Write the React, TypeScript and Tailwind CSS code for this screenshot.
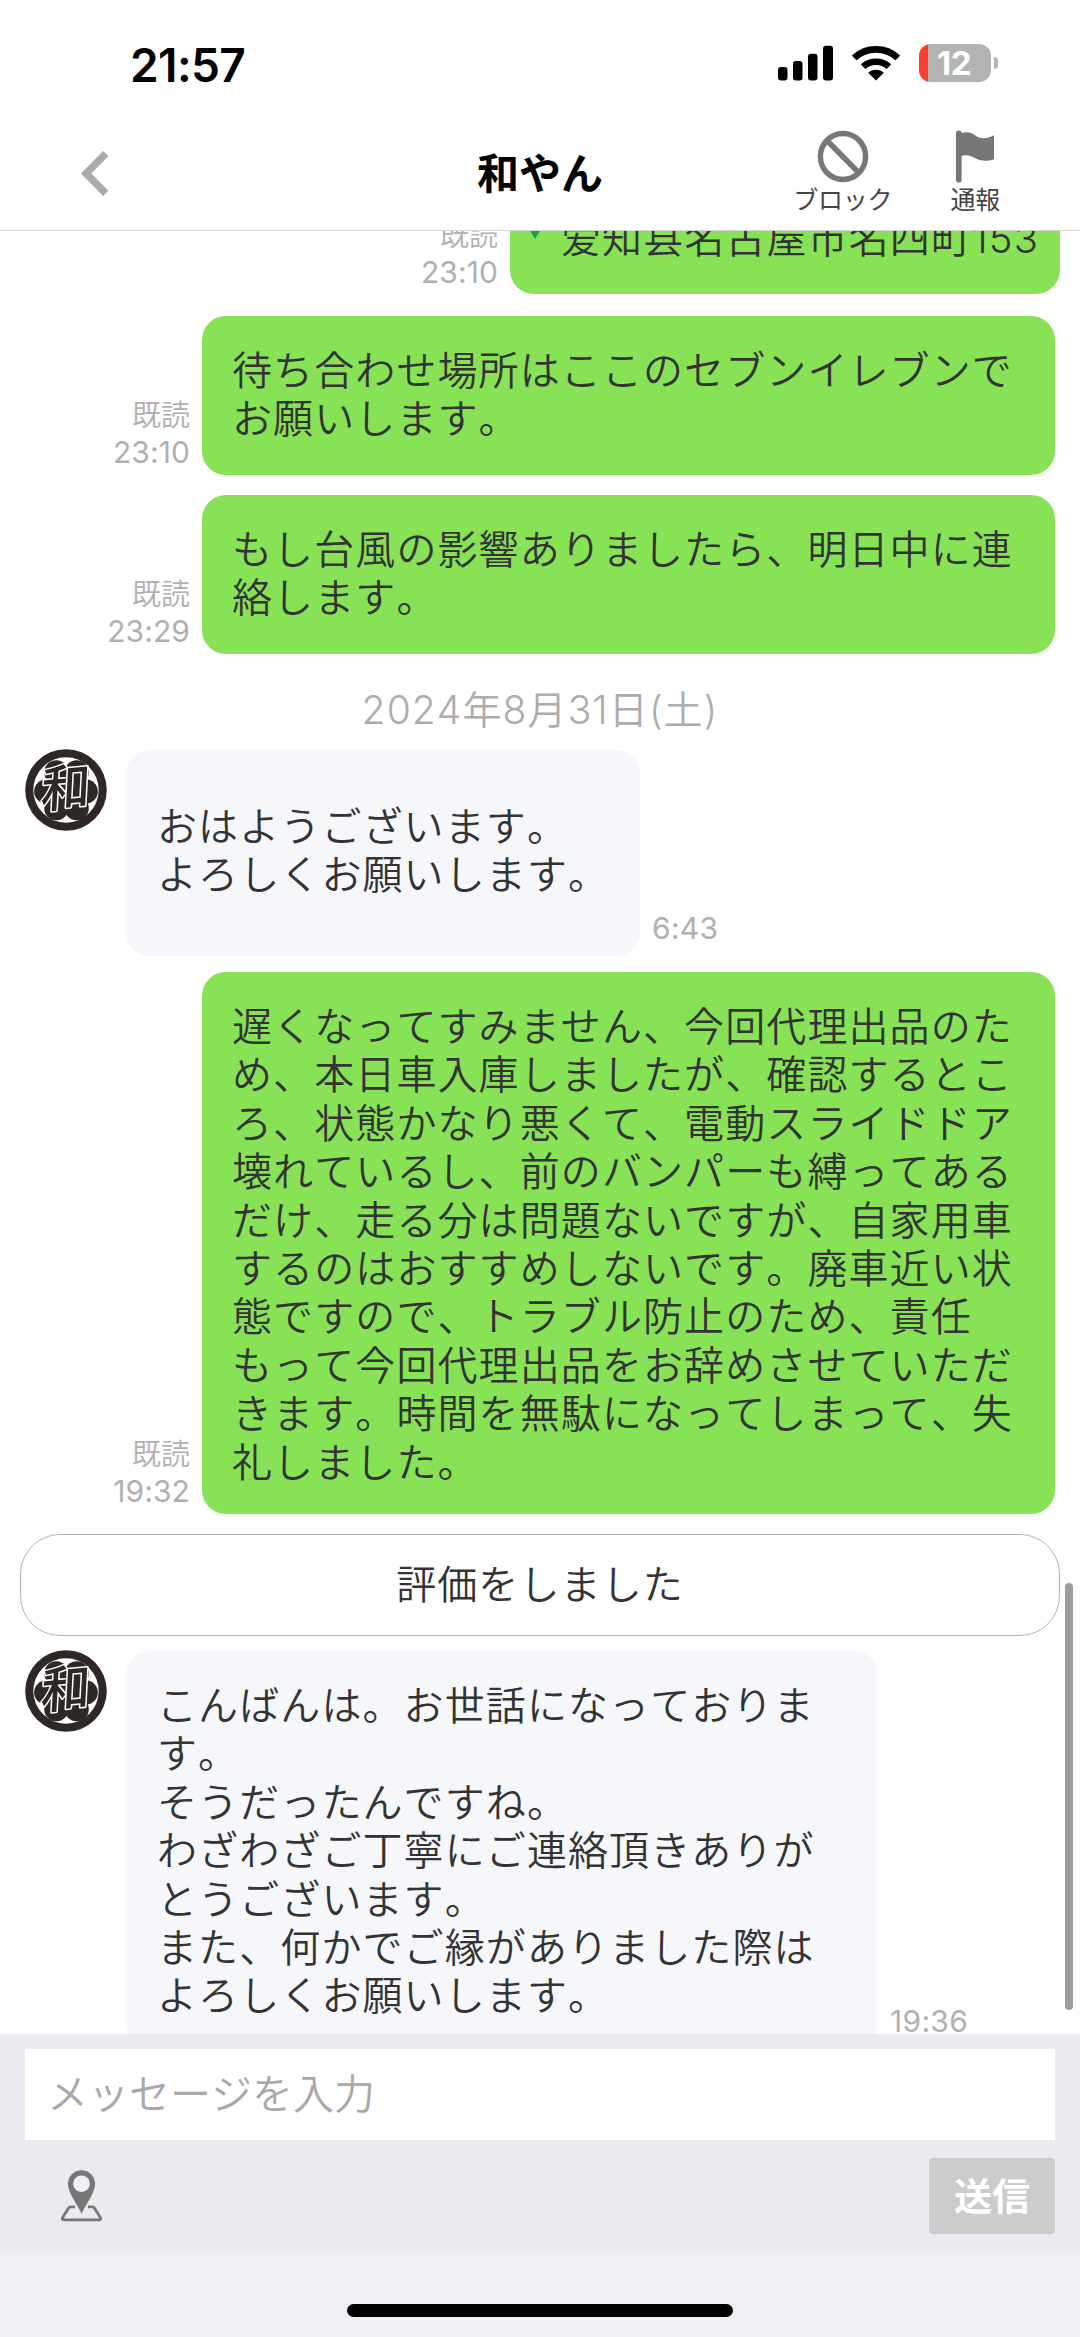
import type { ReactNode } from "react";

type Message = {
  lines: string[];
  time: string;
  className: string;
};

const sent: Record<"place" | "typhoon" | "apology", Message> = {
  place: {
    lines: ["待ち合わせ場所はここのセブンイレブンで", "お願いします。"],
    time: "23:10",
    className: "h-[159px] pt-[31px]"
  },
  typhoon: {
    lines: ["もし台風の影響ありましたら、明日中に連", "絡します。"],
    time: "23:29",
    className: "h-[159px] pt-[31px]"
  },
  apology: {
    lines: [
      "遅くなってすみません、今回代理出品のた",
      "め、本日車入庫しましたが、確認するとこ",
      "ろ、状態かなり悪くて、電動スライドドア",
      "壊れているし、前のバンパーも縛ってある",
      "だけ、走る分は問題ないですが、自家用車",
      "するのはおすすめしないです。廃車近い状",
      "態ですので、トラブル防止のため、責任",
      "もって今回代理出品をお辞めさせていただ",
      "きます。時間を無駄になってしまって、失",
      "礼しました。"
    ],
    time: "19:32",
    className: "h-[542px] pt-[31px]"
  }
};

const received: Record<"morning" | "evening", Message> = {
  morning: {
    lines: ["おはようございます。", "よろしくお願いします。"],
    time: "6:43",
    className: "h-[206px] w-[514px] pt-[53px]"
  },
  evening: {
    lines: [
      "こんばんは。お世話になっておりま",
      "す。",
      "そうだったんですね。",
      "わざわざご丁寧にご連絡頂きありが",
      "とうございます。",
      "また、何かでご縁がありました際は",
      "よろしくお願いします。"
    ],
    time: "19:36",
    className: "h-[398px] w-[752px] pt-[31px]"
  }
};

function StatusBar() {
  return (
    <div className="flex h-[126px] items-start justify-between pr-[82px] pl-[130px] text-black">
      <span className="mt-[35px] font-['Inter'] text-[46px] leading-[60px] font-semibold tracking-[-0.6px]">21:57</span>
      <div className="mt-[44px] flex items-start">
        <svg className="h-[38px] w-[56px]" viewBox="0 0 56 38">
          <rect x="0" y="23" width="9.5" height="13.5" rx="3" />
          <rect x="15" y="17" width="9.5" height="19.5" rx="3" />
          <rect x="30" y="9.8" width="9.5" height="26.7" rx="3" />
          <rect x="45" y="1.8" width="10" height="34.7" rx="3" />
        </svg>
        <svg className="mt-[1px] ml-[17px] h-[36px] w-[50px]" viewBox="0 0 50 37" preserveAspectRatio="none">
          <path d="M25 36.5 17.2 28.6a11 11 0 0 1 15.6 0Z" />
          <path d="M12 22.3a19 19 0 0 1 26 0" fill="none" stroke="#000" strokeWidth="6.6" />
          <path d="M3.2 13.2a31.5 31.5 0 0 1 43.6 0" fill="none" stroke="#000" strokeWidth="6.8" />
        </svg>
        <div className="ml-[18px] flex items-center">
          <div className="flex h-[38px] w-[72px] items-center overflow-hidden rounded-[12px] bg-[#b3b3b3]">
            <div className="h-full w-[9px] bg-[#ff3b30]" />
            <span className="ml-[9px] font-['Inter'] text-[33px] leading-[38px] font-bold tracking-[-0.5px] text-white">12</span>
          </div>
          <div className="ml-[3px] h-[12px] w-[4px] rounded-r-full bg-[#b3b3b3]" />
        </div>
      </div>
    </div>
  );
}

function HeaderAction({ label, children }: { label: string; children: ReactNode }) {
  return (
    <button className="flex flex-col items-center text-[25px] leading-[34px] tracking-[-0.2px] text-[#444]">
      {children}
      <span className="whitespace-nowrap">{label}</span>
    </button>
  );
}

function Header() {
  return (
    <header className="h-[231px] border-b-[1.5px] border-[#d4d4d4] bg-white">
      <StatusBar />
      <div className="grid grid-cols-[1fr_auto_1fr] items-start">
        <svg className="mt-[24px] ml-[80px] h-[47px] w-[30px]" viewBox="0 0 30 48">
          <path d="M26 3.8 6 24l20 20.2" fill="none" stroke="#ababab" strokeWidth="7.6" />
        </svg>
        <h1 className="mt-[18px] text-[42px] leading-[60px] font-bold text-black">和やん</h1>
        <div className="mt-[4px] flex items-start justify-end gap-[58px] pr-[80px]">
          <HeaderAction label="ブロック">
            <svg className="h-[53px] w-[52px]" viewBox="0 0 52 53" fill="none" stroke="#777" strokeWidth="5.4">
              <ellipse cx="26" cy="26.5" rx="22.6" ry="23" />
              <path d="M10 10.5 42 43" />
            </svg>
          </HeaderAction>
          <HeaderAction label="通報">
            <svg className="h-[53px] w-[40px]" viewBox="0 0 40 53" fill="#777">
              <rect x="1" y="0.5" width="5.6" height="52" rx="2.8" />
              <path d="M6 3.3C13 1 17 3 21 6s11 3 18-.8v24c-6 2.3-13 2.3-18-.6s-9-4.6-15-2.6Z" />
            </svg>
          </HeaderAction>
        </div>
      </div>
    </header>
  );
}

function Avatar() {
  return (
    <svg className="mt-[-1px] h-[82px] w-[82px] shrink-0 overflow-visible" viewBox="0 0 81 81">
      <circle cx="40.5" cy="40.5" r="40.3" fill="#2f2626" />
      <circle cx="40.5" cy="40.5" r="32.3" fill="#fff" />
      <g fill="#2f2626">
        <circle cx="31" cy="23" r="12" />
        <circle cx="51" cy="23" r="12" />
        <circle cx="21" cy="42" r="12" />
        <circle cx="60" cy="42" r="12" />
        <circle cx="31" cy="58.5" r="12" />
        <circle cx="51" cy="58.5" r="12" />
        <circle cx="40.5" cy="40.5" r="16" />
      </g>
      <text
        x="40"
        y="56"
        textAnchor="middle"
        transform="rotate(-5 40.5 40.5) skewX(-8) translate(6 0)"
        fontFamily="'Noto Sans CJK JP', sans-serif"
        fontSize="49"
        fontWeight="500"
        fill="#2f2626"
        stroke="#fff"
        strokeWidth="3"
        strokeLinejoin="round"
        paintOrder="stroke"
      >
        和
      </text>
    </svg>
  );
}

function ReadLabel({ time }: { time: string }) {
  return (
    <div className="text-right text-[29px] leading-[36px] text-[#b0b0b0]">
      <p className="font-[350]">既読</p>
      <p className="font-['Inter'] text-[30px] tracking-[0.1px]">{time}</p>
    </div>
  );
}

function BubbleText({ lines }: { lines: string[] }) {
  return (
    <>
      {lines.map((line) => (
        <p key={line} className="whitespace-nowrap">
          {line}
        </p>
      ))}
    </>
  );
}

function SentMessage({ message }: { message: Message }) {
  return (
    <div className="flex items-end justify-end gap-[12px] pr-[25px]">
      <div className="pb-[5px]">
        <ReadLabel time={message.time} />
      </div>
      <div
        className={`w-[853px] rounded-[24px] bg-[#88e255] pl-[30px] text-[40px] leading-[48.4px] font-[350] tracking-[1.1px] text-[#333] ${message.className}`}
      >
        <BubbleText lines={message.lines} />
      </div>
    </div>
  );
}

function ReceivedMessage({ message }: { message: Message }) {
  return (
    <div className="flex items-start pl-[25px]">
      <Avatar />
      <div
        className={`ml-[19px] shrink-0 rounded-[24px] bg-[#f5f7fb] pl-[31px] text-[40px] leading-[48.4px] font-[350] tracking-[1.1px] text-[#333] ${message.className}`}
      >
        <BubbleText lines={message.lines} />
      </div>
      <span className="ml-[12px] self-end pb-[10px] font-['Inter'] text-[30px] leading-[36px] tracking-[0.3px] text-[#b0b0b0]">
        {message.time}
      </span>
    </div>
  );
}

function Composer() {
  return (
    <footer className="bg-[#efeff4]">
      <div className="h-[218px] bg-[#ebecf1] px-[25px] pt-[15px]">
        <div className="flex h-[91px] items-center bg-white pl-[22px] text-[41px] font-[350] text-[#a8a8a8]">
          メッセージを入力
        </div>
        <div className="flex items-start justify-between pt-[18px] pl-[35px]">
          <svg className="mt-[11px] h-[53px] w-[43px]" viewBox="0 0 43 54">
            <path
              d="M15 38.5h-4.5q-1.5 0-2.3 1.5L2.2 49.5q-1 2.3 1 2.3h36.6q2 0 1-2.3L34.8 40q-.8-1.5-2.3-1.5H28"
              fill="none"
              stroke="#777"
              strokeWidth="2.8"
            />
            <path
              d="M21.5 46.5C18 38 7.2 25 7.2 15a14.3 14.3 0 0 1 28.6 0c0 10-10.8 23-14.3 31.5Z"
              fill="#777"
              stroke="#ebecf1"
              strokeWidth="1"
            />
            <circle cx="21.5" cy="15" r="8.5" fill="#f1f1f5" />
          </svg>
          <button className="h-[76px] w-[126px] rounded-[3px] bg-[#ccc] text-[38px] leading-[74px] font-bold text-white">
            送信
          </button>
        </div>
      </div>
      <div className="flex h-[85px] items-start justify-center pt-[52px]">
        <div className="h-[13px] w-[386px] rounded-full bg-black" />
      </div>
    </footer>
  );
}

export default function App() {
  return (
    <div className="h-[2337px] w-[1080px] overflow-hidden bg-white font-['Inter','Noto_Sans_CJK_JP',sans-serif] [font-kerning:none]">
      <Header />
      <main className="relative h-[1803px] overflow-hidden">
        <div className="-mt-[33px] flex items-end justify-end gap-[12px] pr-[20px]">
          <div className="pb-[4px]">
            <ReadLabel time="23:10" />
          </div>
          <div className="flex h-[96px] w-[550px] items-start rounded-b-[24px] bg-[#88e255] pt-[17px] pl-[19px] text-[40px] leading-[48.4px] font-[350] tracking-[1.1px] text-[#333]">
            <svg className="mt-[9px] h-[15px] w-[12px]" viewBox="0 0 12 15">
              <path d="M0 0h12v5L6 15 0 5Z" fill="#1a9f5c" />
            </svg>
            <p className="ml-[20px] whitespace-nowrap">爱知县名古屋市名四町153</p>
          </div>
        </div>
        <div className="mt-[22px] flex flex-col gap-[20px]">
          <SentMessage message={sent.place} />
          <SentMessage message={sent.typhoon} />
        </div>
        <p className="mt-[28px] text-center text-[39px] leading-[56px] font-[350] tracking-[1.1px] text-[#acacac]">
          2024年8月31日(土)
        </p>
        <div className="mt-[12px]">
          <ReceivedMessage message={received.morning} />
        </div>
        <div className="mt-[16px]">
          <SentMessage message={sent.apology} />
        </div>
        <div className="mx-[20px] mt-[20px] flex h-[102px] items-center justify-center rounded-[40px] border-[1.5px] border-[#b5b5b5] text-[40px] font-[350] tracking-[1.1px] text-[#333]">
          評価をしました
        </div>
        <div className="mt-[15px]">
          <ReceivedMessage message={received.evening} />
        </div>
        <div className="absolute top-[1352px] right-[7px] h-[427px] w-[8px] rounded-full bg-[#9d9d9d]" />
      </main>
      <Composer />
    </div>
  );
}
